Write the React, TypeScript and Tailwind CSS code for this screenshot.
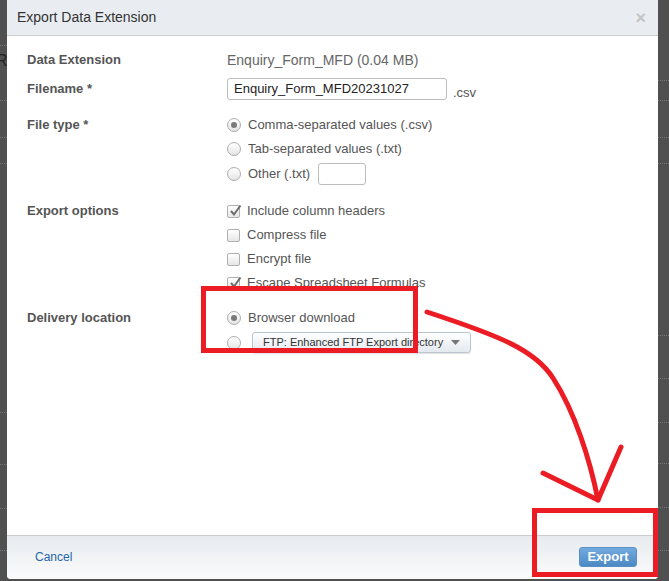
const font = { fontFamily: '"Liberation Sans", Arial, sans-serif' };

const Radio = ({ checked }: { checked?: boolean }) => (
  <span className="w-[14px] h-[14px] rounded-full border border-[#aeaeae] bg-gradient-to-b from-white to-[#e4e4e4] flex items-center justify-center shrink-0">
    {checked && <span className="w-[6px] h-[6px] rounded-full bg-[#7a7a7a]"></span>}
  </span>
);

const Check = ({ checked }: { checked?: boolean }) => (
  <span className="w-[13px] h-[13px] rounded-[2px] border border-[#b0b0b0] bg-gradient-to-b from-white to-[#e6e6e6] flex items-center justify-center shrink-0 relative">
    {checked && (
      <svg width="13" height="13" viewBox="0 0 13 13" className="absolute -top-[2px] left-[1px]">
        <path d="M2 7 L5 10.5 L11.5 1.5" fill="none" stroke="#6b6b6b" strokeWidth="2" />
      </svg>
    )}
  </span>
);

const Opt = ({ children }: { children: React.ReactNode }) => (
  <div className="h-6 flex items-center gap-[7px] text-[13px] text-[#555] whitespace-nowrap">{children}</div>
);

const Label = ({ children }: { children: React.ReactNode }) => (
  <div className="w-[200px] h-6 flex items-center text-[13px] font-bold text-[#555] shrink-0">{children}</div>
);

const leftLines = [45, 100, 137, 163, 412, 464, 508, 550];
const rightLines = [80, 100, 137, 163, 335, 378, 422, 463, 507, 550];

export default function App() {
  return (
    <div className="w-[669px] h-[581px] bg-[#505050] relative overflow-hidden" style={font}>
      {/* page behind the overlay */}
      <div className="absolute left-0 top-[49px] w-[7px] overflow-hidden">
        <span className="block -ml-[4px] text-[16px] text-[#222] whitespace-nowrap">Re</span>
      </div>
      {leftLines.map((y) => (
        <div key={"l" + y} className="absolute left-0 w-[7px] border-t border-dotted border-[#777]" style={{ top: y }}></div>
      ))}
      {rightLines.map((y) => (
        <div key={"r" + y} className="absolute right-0 w-[11px] border-t border-dotted border-[#777]" style={{ top: y }}></div>
      ))}

      <div className="relative flex pl-[7px]">
        <div className="w-[651px] h-[579px] bg-white rounded-b-[4px] flex flex-col overflow-hidden">
          {/* header */}
          <div className="h-[36px] bg-[#e9edf1] border-b border-[#c9cdd1] flex items-center justify-between pl-[10px] pr-[12px] shrink-0">
            <span className="text-[14px] text-[#333]">Export Data Extension</span>
            <span className="text-[18px] font-bold text-[#c4c4c4] leading-none">×</span>
          </div>

          {/* body */}
          <div className="flex-1 pl-[20px] pt-[12px] flex flex-col">
            <div className="flex">
              <Label>Data Extension</Label>
              <div className="h-6 flex items-center text-[14px] text-[#666]">Enquiry_Form_MFD (0.04 MB)</div>
            </div>

            <div className="flex mt-[6px]">
              <div className="w-[200px] text-[13px] font-bold text-[#555] pt-[1px]">Filename *</div>
              <div className="flex items-end gap-[6px]">
                <div className="w-[220px] h-[22px] border border-[#bdbdbd] rounded-[3px] px-[6px] flex items-center text-[13px] text-[#222]">
                  Enquiry_Form_MFD20231027
                </div>
                <span className="text-[13px] text-[#555] leading-none mb-[1px]">.csv</span>
              </div>
            </div>

            <div className="flex mt-[13px]">
              <Label>File type *</Label>
              <div className="flex flex-col">
                <Opt><Radio checked />Comma-separated values (.csv)</Opt>
                <Opt><Radio />Tab-separated values (.txt)</Opt>
                <div className="h-6 flex items-center gap-[7px] text-[13px] text-[#555] mt-[1px]">
                  <Radio />Other (.txt)
                  <span className="w-[48px] h-[22px] border border-[#bdbdbd] rounded-[3px] ml-[1px]"></span>
                </div>
              </div>
            </div>

            <div className="flex mt-[13px]">
              <Label>Export options</Label>
              <div className="flex flex-col">
                <Opt><Check checked />Include column headers</Opt>
                <Opt><Check />Compress file</Opt>
                <Opt><Check />Encrypt file</Opt>
                <Opt><Check checked />Escape Spreadsheet Formulas</Opt>
              </div>
            </div>

            <div className="flex mt-[11px]">
              <Label>Delivery location</Label>
              <div className="flex flex-col">
                <Opt><Radio checked />Browser download</Opt>
                <div className="h-[25px] flex items-center gap-[11px]">
                  <Radio />
                  <div className="w-[219px] h-[21px] shrink-0 whitespace-nowrap border border-[#bcc6d0] rounded-[3px] bg-gradient-to-b from-white to-[#e3e9ef] shadow-[0_1px_1px_rgba(0,0,0,0.12)] flex items-center justify-between pl-[10px] pr-[10px] text-[11px] text-[#333]">
                    <span>FTP: Enhanced FTP Export directory</span>
                    <svg width="9" height="5" viewBox="0 0 9 5" className="shrink-0"><path d="M0 0 H9 L4.5 5 Z" fill="#777" /></svg>
                  </div>
                </div>
              </div>
            </div>
          </div>

          {/* footer */}
          <div className="h-[44px] border-t border-[#c9cdd1] bg-gradient-to-b from-[#e7ebef] to-[#fbfbfc] flex items-center justify-between pl-[28px] pr-[21px] pb-[2px] shrink-0">
            <span className="text-[12px] text-[#2565a8]">Cancel</span>
            <button className="w-[58px] h-[20px] rounded-[3px] bg-gradient-to-b from-[#72aade] to-[#4c89c4] border border-[#5a8fc2] text-white text-[13px] font-bold flex items-center justify-center">
              Export
            </button>
          </div>
        </div>
      </div>

      {/* red annotations drawn over the screenshot */}
      <svg className="absolute inset-0 pointer-events-none" width="669" height="581" viewBox="0 0 669 581">
        <g fill="none" stroke="#ec1c24" strokeWidth="5" strokeLinecap="round" strokeLinejoin="round">
          <rect x="203.5" y="288.5" width="212" height="62" strokeLinecap="butt" strokeLinejoin="miter" />
          <rect x="534.5" y="510.5" width="121" height="64" strokeLinecap="butt" strokeLinejoin="miter" />
          <path d="M427 312 C 500 336, 535 350, 553 378 C 575 412, 590 460, 598 500" />
          <path d="M543 473 L598 500 L621 447" />
        </g>
      </svg>
    </div>
  );
}
